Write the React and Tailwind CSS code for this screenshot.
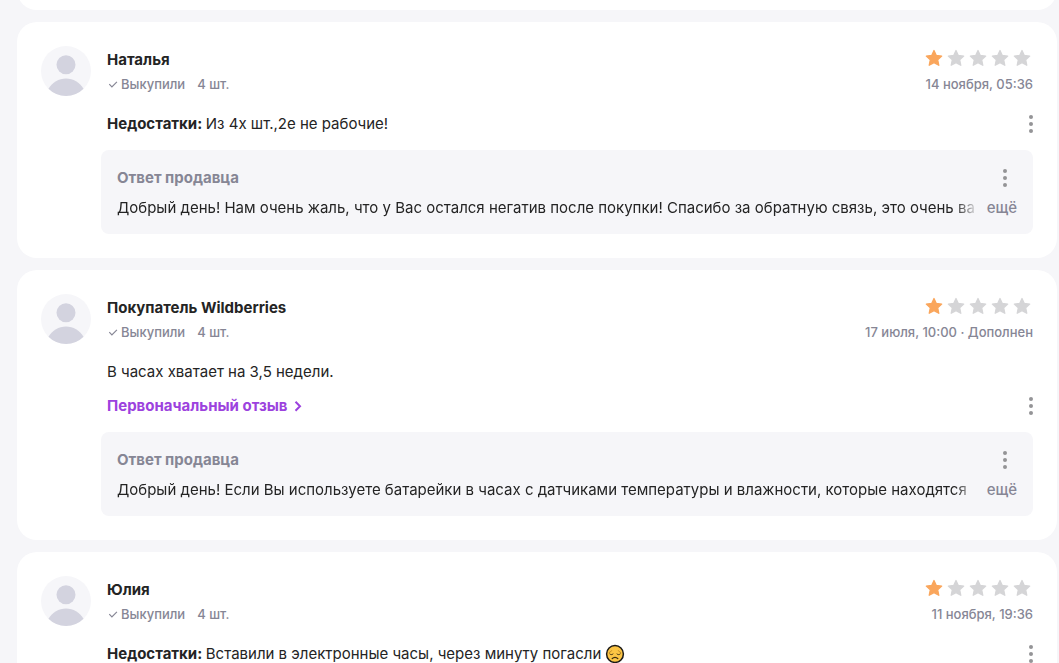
import React from 'react';

const reviews = [
  {
    id: 1,
    name: 'Наталья',
    date: '14 ноября, 05:36',
    rating: 1,
    label: 'Недостатки:',
    text: 'Из 4х шт.,2е не рабочие!',
    reply: 'Добрый день! Нам очень жаль, что у Вас остался негатив после покупки! Спасибо за обратную связь, это очень ва',
  },
  {
    id: 2,
    name: 'Покупатель Wildberries',
    date: '17 июля, 10:00 · Дополнен',
    rating: 1,
    text: 'В часах хватает на 3,5 недели.',
    hasOriginal: true,
    reply: 'Добрый день! Если Вы используете батарейки в часах с датчиками температуры и влажности, которые находятся',
  },
  {
    id: 3,
    name: 'Юлия',
    date: '11 ноября, 19:36',
    rating: 1,
    label: 'Недостатки:',
    text: 'Вставили в электронные часы, через минуту погасли',
    sad: true,
  },
];

const Avatar = () => (
  <svg className="size-[50px] shrink-0" viewBox="0 0 50 50" aria-hidden="true">
    <circle cx="25" cy="25" r="25" fill="#f6f6f9" />
    <circle cx="25" cy="18.7" r="9.5" fill="#d3d3df" />
    <path d="M7.5 42.8C11.3 36.4 17.8 32.5 25 32.5s13.7 3.9 17.5 10.3A25 25 0 0 1 25 50 25 25 0 0 1 7.5 42.8Z" fill="#d3d3df" />
  </svg>
);

const Star = ({ filled }) => (
  <svg className={filled ? 'size-[22px] text-[#faa65c]' : 'size-[22px] text-[#d5d5d7]'} viewBox="0 0 22 22" aria-hidden="true">
    <path
      d="M11 2.500l2.300 5 5.400.6-4 3.700 1.100 5.500L11 14.600l-4.800 2.700 1.100-5.500-4-3.700 5.400-.6z"
      fill="currentColor"
      stroke="currentColor"
      strokeWidth="1.3"
      strokeLinejoin="round"
    />
  </svg>
);

const Dots = () => (
  <svg className="h-[18px] w-1" viewBox="0 0 4 18" fill="#949497" aria-hidden="true">
    <circle cx="2" cy="2" r="2" />
    <circle cx="2" cy="9" r="2" />
    <circle cx="2" cy="16" r="2" />
  </svg>
);

const SadFace = () => (
  <svg className="ml-1 inline-block size-[20px] align-[-5px]" viewBox="0 0 20 20" role="img" aria-label="грустный смайлик">
    <circle cx="10" cy="10" r="8.4" fill="#fcc544" stroke="#1c1a17" strokeWidth="1.5" />
    <g fill="none" stroke="#3a2a12" strokeLinecap="round">
      <path d="M4.2 8.6c.9-.3 1.9-1 2.4-1.9M15.8 8.6c-.9-.3-1.9-1-2.4-1.9" strokeWidth=".8" stroke="#b07a1c" />
      <path d="M4.8 10c.9.9 2.3.9 3.2 0M12 10c.9.9 2.3.9 3.2 0" strokeWidth="1" />
      <path d="M7.2 14.6c1.4-1.7 4.2-1.7 5.6 0" strokeWidth="1.3" />
    </g>
  </svg>
);

const SellerReply = ({ text }) => (
  <div className="mt-3.5 ml-[60px] rounded-lg bg-[#f6f6f9] px-4 pt-4 pb-3.5">
    <div className="flex items-center justify-between">
      <p className="font-bold text-[#868695]">Ответ продавца</p>
      <button type="button" aria-label="Действия с ответом" className="flex w-6 justify-center">
        <Dots />
      </button>
    </div>
    <div className="mt-1.5 flex gap-2">
      <p className="min-w-0 flex-1 overflow-hidden whitespace-nowrap [mask-image:linear-gradient(to_left,transparent,black_24px)]">{text}</p>
      <button type="button" className="font-medium text-[#868695]">ещё</button>
    </div>
  </div>
);

const Review = ({ review }) => (
  <article className="rounded-[20px] bg-white p-6">
    <header className="flex gap-4">
      <Avatar />
      <div className="flex-1 py-0.5">
        <h3 className="font-bold">{review.name}</h3>
        <p className="mt-0.5 flex items-center text-[13px] leading-5 font-medium text-[#868695]">
          <svg className="mr-0.5 size-3" viewBox="0 0 12 12" fill="none" stroke="currentColor" strokeWidth="1.2" aria-hidden="true">
            <path d="M2.3 6.2l2.6 2.6 5-5" />
          </svg>
          <span>Выкупили</span>
          <span className="ml-3">4 шт.</span>
        </p>
      </div>
      <div className="flex flex-col items-end gap-1 py-0.5">
        <div className="flex" role="img" aria-label={`Оценка ${review.rating} из 5`}>
          {[1, 2, 3, 4, 5].map((n) => (
            <Star key={n} filled={n <= review.rating} />
          ))}
        </div>
        <time className="text-[13px] leading-5 font-medium text-[#868695]">{review.date}</time>
      </div>
    </header>

    <div className="mt-4 ml-[66px] flex items-end justify-between">
      <div>
        <p>
          {review.label && <span className="font-bold">{review.label} </span>}
          {review.text}
          {review.sad && <SadFace />}
        </p>
        {review.hasOriginal && (
          <button type="button" className="mt-2.5 flex items-center font-bold text-[#9c42de]">
            Первоначальный отзыв
            <svg className="ml-1.5 h-3 w-2.5" viewBox="0 0 10 12" fill="none" stroke="currentColor" strokeWidth="2" aria-hidden="true">
              <path d="M2.5 1.7L7 6.2l-4.5 4.500" />
            </svg>
          </button>
        )}
      </div>
      <button type="button" aria-label="Действия с отзывом" className="flex h-6 items-center">
        <Dots />
      </button>
    </div>

    {review.reply && <SellerReply text={review.reply} />}
  </article>
);

export default function App() {
  return (
    <main className="h-screen overflow-hidden bg-[#f6f6f9] pr-0.5 pl-[17px] font-['Inter','Noto_Sans',sans-serif] text-[15px] leading-6 text-[#242424]">
      <div className="-mt-[50px] flex flex-col gap-3">
        <div className="h-[60px] rounded-[20px] bg-white" />
        {reviews.map((review) => (
          <Review key={review.id} review={review} />
        ))}
      </div>
    </main>
  );
}
